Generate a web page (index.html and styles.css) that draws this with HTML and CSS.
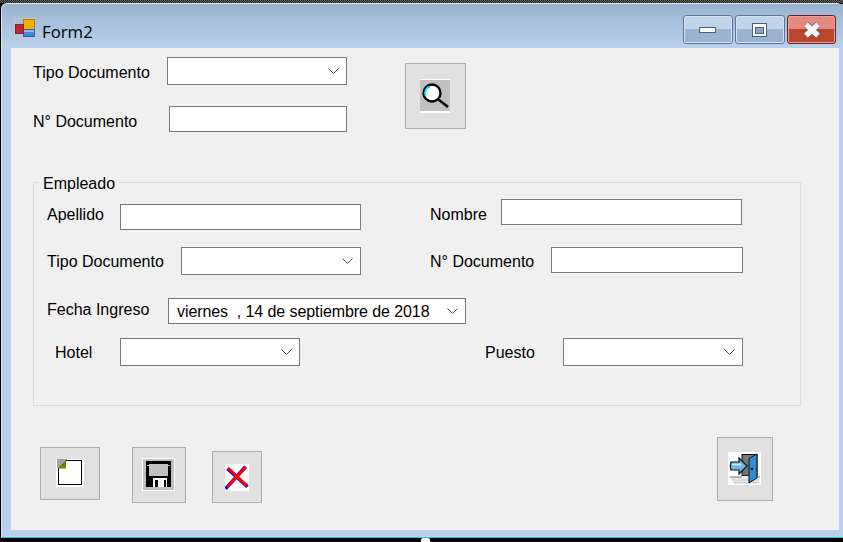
FILE: index.html
```html
<!DOCTYPE html>
<html lang="es">
<head>
<meta charset="utf-8">
<title>Form2</title>
<link rel="stylesheet" href="styles.css">
</head>
<body>
<div class="screen">
  <div class="topband"></div>
  <div class="window">
    <div class="titlebar">
      <svg class="appicon" width="22" height="22" viewBox="0 0 22 22" shape-rendering="crispEdges">
        <rect x="0.5" y="0.5" width="20" height="20" fill="none" stroke="#c4c8cc"/>
        <rect x="9.500" y="1.500" width="11" height="10" fill="#f2b100" stroke="#a77f10"/>
        <rect x="9.500" y="11.500" width="11" height="7" fill="#4a86d8" stroke="#2f64b0"/>
        <rect x="10" y="12" width="10" height="2" fill="#8db8ee"/>
        <rect x="1.500" y="6.500" width="8" height="9" fill="#c8252b" stroke="#8c1d20"/>
      </svg>
      <span class="title">Form2</span>
      <div class="winbtns">
        <div class="winbtn">
          <svg width="18" height="8" viewBox="0 0 18 8" shape-rendering="crispEdges"><rect x="0.5" y="1.5" width="16" height="5" fill="#fff" stroke="#4c5f7a"/></svg>
        </div>
        <div class="winbtn">
          <svg width="18" height="16" viewBox="0 0 18 16" shape-rendering="crispEdges"><rect x="1.5" y="1.5" width="14" height="13" fill="#fff" stroke="#4c5f7a"/><rect x="4.5" y="5.5" width="8" height="6" fill="#8ea7c4" stroke="#4c5f7a"/></svg>
        </div>
        <div class="winbtn close">
          <svg width="20" height="18" viewBox="0 0 20 18"><path d="M4 3.500 L16 14.500 M16 3.500 L4 14.500" stroke="#55606e" stroke-width="7"/><path d="M4 3.500 L16 14.500 M16 3.500 L4 14.500" stroke="#f4f4f4" stroke-width="5.500"/></svg>
        </div>
      </div>
    </div>
    <div class="client">
      <div class="search">
        <div class="search-fields">
          <div class="row">
            <span class="label w134 tall">Tipo Documento</span>
            <div class="field combo w180"><svg class="chev" width="11" height="6" viewBox="0 0 11 6"><path d="M0.5 0.5 L5.5 5.5 L10.5 0.5" fill="none" stroke="#555"/></svg></div>
          </div>
          <div class="row gap21">
            <span class="label w136 tall">N° Documento</span>
            <div class="field text w178"></div>
          </div>
        </div>
        <button class="btn btn-search">
          <svg width="30" height="34" viewBox="0 0 30 34" shape-rendering="crispEdges">
            <rect width="30" height="34" fill="#fff"/>
            <rect y="1" width="30" height="31" fill="#c0c0c0"/>
            <g shape-rendering="auto">
              <circle cx="12" cy="14" r="8.500" fill="#fff" stroke="#000" stroke-width="2.400"/>
              <path d="M5.500 16.500 A7 7 0 0 1 10 7.300" fill="none" stroke="#00e8e8" stroke-width="1.800"/>
              <path d="M18.500 20.500 L28 28" stroke="#000" stroke-width="2.500"/>
            </g>
          </svg>
        </button>
      </div>
      <div class="group">
        <div class="legend">Empleado</div>
        <div class="grow r1">
          <span class="label offset w73">Apellido</span>
          <div class="field text w241 drop5"></div>
          <span class="label offset push69 w71">Nombre</span>
          <div class="field text w241"></div>
        </div>
        <div class="grow r2">
          <span class="label w134 mid">Tipo Documento</span>
          <div class="field combo w180"><svg class="chev" width="11" height="6" viewBox="0 0 11 6"><path d="M0.5 0.5 L5.5 5.5 L10.5 0.500" fill="none" stroke="#555"/></svg></div>
          <span class="label push69 w121 mid">N° Documento</span>
          <div class="field text w192"></div>
        </div>
        <div class="grow r3">
          <span class="label w121 mid">Fecha Ingreso</span>
          <div class="field date w298">
            <span class="dateval">viernes&nbsp;&nbsp;, 14 de septiembre de 2018</span>
            <svg class="chev" width="11" height="6" viewBox="0 0 11 6"><path d="M0.5 0.5 L5.5 5.5 L10.5 0.500" fill="none" stroke="#555"/></svg>
          </div>
        </div>
        <div class="grow r4">
          <span class="label indent w65 mid">Hotel</span>
          <div class="field combo w180"><svg class="chev" width="11" height="6" viewBox="0 0 11 6"><path d="M0.5 0.5 L5.5 5.5 L10.5 0.500" fill="none" stroke="#555"/></svg></div>
          <span class="label push185 w78 mid">Puesto</span>
          <div class="field combo w180"><svg class="chev" width="11" height="6" viewBox="0 0 11 6"><path d="M0.5 0.5 L5.5 5.5 L10.5 0.500" fill="none" stroke="#555"/></svg></div>
        </div>
      </div>
      <div class="actions">
        <button class="btn btn-new">
          <svg width="28" height="28" viewBox="0 0 28 28" shape-rendering="crispEdges">
            <rect width="28" height="28" fill="#fff"/>
            <rect x="1" y="0" width="10" height="9" fill="#a0a0a0"/>
            <path d="M10.500 1.500 H25.500 V25.500 H2.500 V9.500 Z" fill="#fff" stroke="#000"/>
            <path d="M2 9.500 L10 1.500 V9.500 Z" fill="#7c7c00" shape-rendering="auto"/>
          </svg>
        </button>
        <button class="btn btn-save">
          <svg width="33" height="33" viewBox="0 0 33 33" shape-rendering="crispEdges">
            <rect width="33" height="33" fill="#fff"/>
            <rect x="1" y="1" width="31" height="31" fill="#c0c0c0"/>
            <rect x="4" y="3" width="25" height="26" fill="#000"/>
            <rect x="7" y="6" width="19" height="12" fill="#c0c0c0"/>
            <rect x="11" y="20" width="14" height="9" fill="#fff"/>
            <rect x="13" y="22" width="3" height="7" fill="#000"/>
            <rect x="22" y="22" width="2" height="7" fill="#000"/>
            <rect x="5" y="7" width="2" height="1" fill="#c0c0c0"/>
            <rect x="26" y="7" width="2" height="1" fill="#c0c0c0"/>
          </svg>
        </button>
        <button class="btn btn-del">
          <svg width="24" height="27" viewBox="0 0 24 27">
            <rect width="24" height="27" fill="#fff"/>
            <path d="M3 4 L23 22 M21 2 L1 24" stroke="#0000ff" stroke-width="3.500" transform="translate(-0.500 0.800)"/>
            <path d="M3 4 L22 22 M21 3 L2 23" stroke="#ff0000" stroke-width="3"/>
          </svg>
        </button>
        <button class="btn btn-exit">
          <svg width="33" height="33" viewBox="0 0 33 33">
            <rect width="33" height="33" fill="#fff"/>
            <path d="M2 25 H30 L32 32 H6 Z" fill="#e8e8e8"/>
            <path d="M4 28 H30 M6 30.500 H31" stroke="#c4c4c4" stroke-width="1" stroke-dasharray="2 1"/>
            <path d="M2 25 H14 M28 25 H32" stroke="#777" stroke-width="1"/>
            <rect x="14" y="2.500" width="15" height="21" fill="#777" stroke="#111"/>
            <path d="M21 6.500 L29 2 V26 L21 31 Z" fill="#2f8fd0" stroke="#111" stroke-width="1"/>
            <circle cx="24" cy="17" r="1.300" fill="#111"/>
            <path d="M3 10 H11 V6 L19 14 L11 22 V18 H3 Q1.500 14 3 10 Z" fill="#6cbdea" stroke="#111" stroke-width="1.200"/>
            <path d="M4 12.500 H13" stroke="#d4effc" stroke-width="1.500"/>
          </svg>
        </button>
      </div>
    </div>
  </div>
  <div class="notch"></div>
</div>
</body>
</html>
```
FILE: styles.css
```css
* { box-sizing: border-box; }
html, body { margin: 0; padding: 0; }
body {
  width: 843px;
  height: 542px;
  overflow: hidden;
  background: #000;
  font-family: "Liberation Sans", Arial, sans-serif;
  font-size: 16px;
  color: #000;
}
.screen { position: relative; width: 843px; height: 542px; }
.topband {
  height: 3px;
  background: repeating-conic-gradient(#1c1c1c 0 25%, #6a6a6a 0 50%) 0 0 / 2px 2px;
}
.window {
  margin-left: 1px;
  width: 842px;
  height: 535px;
  border-radius: 6px 6px 0 0;
  border-top: 1px solid #dbe5f0;
  border-left: 1px solid #dbe5f0;
  border-bottom: 1px solid #27c3e0;
  background: #b9d1ea;
}
.titlebar {
  height: 44px;
  display: flex;
  align-items: flex-start;
  padding-left: 12px;
  border-radius: 6px 0 0 0;
  background: linear-gradient(#9ab3d0, #b9d1ea);
}
.appicon { margin-top: 14px; }
.title {
  margin: 17px 0 0 6px;
  font-family: "Open Sans", sans-serif;
  font-size: 16.800px;
  line-height: 22px;
  color: #000;
}
.winbtns { display: flex; gap: 2px; margin: 11px 0 0 auto; padding-right: 7px; }
.winbtn {
  width: 50px;
  height: 29px;
  display: flex;
  align-items: center;
  justify-content: center;
  border: 1px solid #5d7797;
  border-radius: 3px;
  background: linear-gradient(#c0d5ea 0 50%, #99b3d0 50% 100%);
  box-shadow: inset 0 0 0 1px #d3e1f0;
}
.winbtn.close {
  width: 49px;
  border-color: #6b2028;
  background: linear-gradient(#e58a80 0 50%, #bb462c 50% 100%);
  box-shadow: inset 0 0 0 1px #eaa49c;
}
.client {
  width: 828px;
  height: 482px;
  margin-left: 9px;
  padding: 9px 0 0 22px;
  background: #f0f0f0;
  display: flex;
  flex-direction: column;
}
.search { display: flex; align-items: flex-start; height: 75px; }
.row { display: flex; align-items: flex-start; }
.gap21 { margin-top: 21px; }
.label { display: block; line-height: 20px; white-space: nowrap; flex: none; }
.tall { margin-top: 6px; }
.w65 { width: 65px; }
.w71 { width: 71px; }
.w73 { width: 73px; }
.w78 { width: 78px; }
.w121 { width: 121px; }
.w134 { width: 134px; }
.w136 { width: 136px; }
.w178 { width: 178px; }
.w180 { width: 180px; }
.w192 { width: 192px; }
.w241 { width: 241px; }
.w298 { width: 298px; }
.field {
  flex: none;
  position: relative;
  background: #fff;
  border: 1px solid #7a7a7a;
  display: flex;
  align-items: center;
}
.text, .date { height: 26px; }
.combo { height: 28px; }
.chev { position: absolute; right: 7px; top: 50%; margin-top: -3px; }
.dateval { padding: 2px 0 0 8px; white-space: nowrap; letter-spacing: -0.08px; }
.btn {
  flex: none;
  display: flex;
  align-items: center;
  justify-content: center;
  padding: 0;
  background: #e1e1e1;
  border: 1px solid #adadad;
  border-radius: 0;
}
.btn-search { width: 61px; height: 66px; margin: 6px 0 0 58px; padding-right: 1px; }
.group {
  width: 768px;
  height: 224px;
  margin-top: 50px;
  padding-left: 13px;
  border: 1px solid #dcdcdc;
}
.legend {
  display: table;
  margin: -8px 0 0 -8px;
  padding: 0 4px;
  line-height: 18px;
  background: #f0f0f0;
}
.grow { display: flex; align-items: flex-start; }
.r1 { margin-top: 6px; }
.r2 { margin-top: 17px; }
.r3 { margin-top: 23px; }
.r4 { margin-top: 14px; }
.offset { margin-top: 5px; }
.drop5 { margin-top: 5px; }
.r1 .offset { margin-top: 6px; }
.push69 { margin-left: 69px; }
.push185 { margin-left: 185px; }
.indent { margin-left: 8px; }
.mid { margin-top: 5px; }
.r3 .mid { margin-top: 2px; }
.actions { display: flex; align-items: flex-start; margin-top: 31px; padding-left: 7px; }
.btn-new { width: 60px; height: 53px; margin-top: 10px; padding-bottom: 1px; }
.btn-save { width: 54px; height: 56px; margin: 10px 0 0 32px; padding: 0 1px 1px 0; }
.btn-del { width: 50px; height: 52px; margin: 14px 0 0 26px; padding-top: 1px; }
.btn-exit { width: 56px; height: 64px; margin: 0 66px 0 auto; padding: 0 1px 1px 0; }
.notch {
  position: absolute;
  left: 421px;
  bottom: 0;
  width: 9px;
  height: 4px;
  background: #fff;
  border-radius: 2px 2px 0 0;
}
```
